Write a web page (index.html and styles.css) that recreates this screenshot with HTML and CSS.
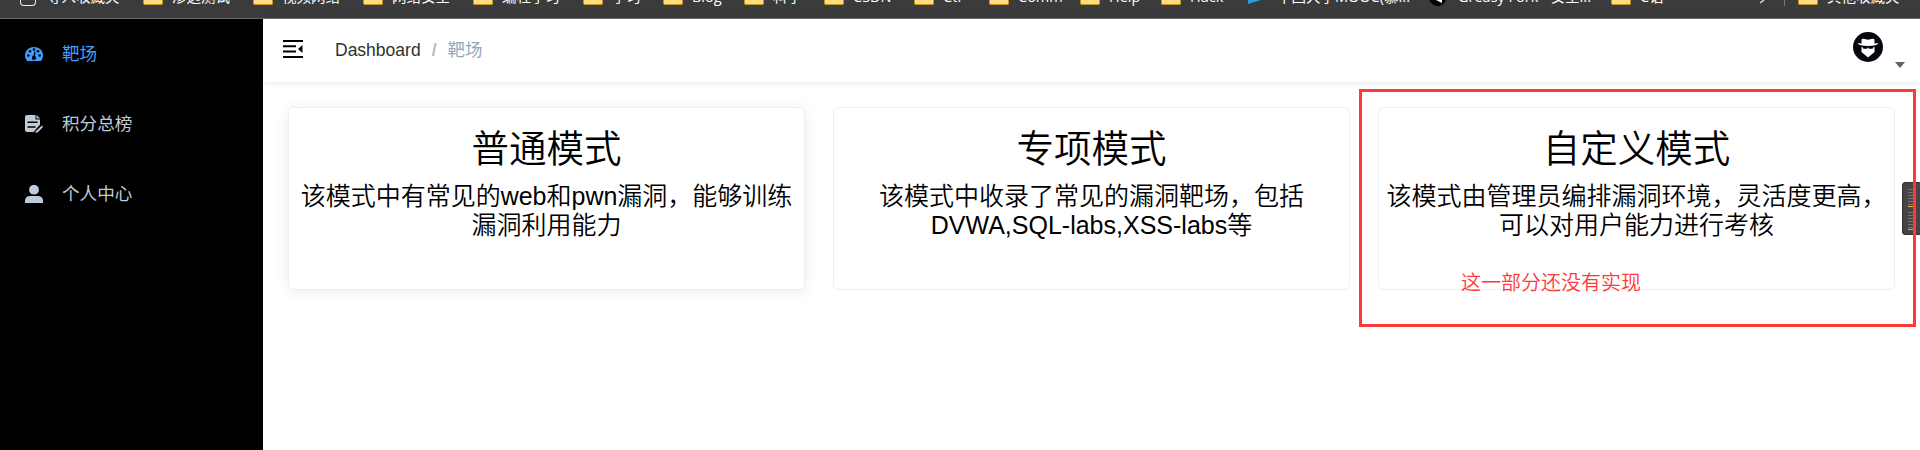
FILE: index.html
```html
<!DOCTYPE html>
<html lang="zh-CN">
<head>
<meta charset="utf-8">
<title>靶场</title>
<link rel="stylesheet" href="styles.css">
</head>
<body>
<nav class="bookmarks">
  <span class="bm bm-wide"><i class="device"></i><b>导入收藏夹</b></span>
  <span class="bm" style="width:110px"><i class="folder"></i><b>渗透测试</b></span>
  <span class="bm" style="width:110px"><i class="folder"></i><b>视频网络</b></span>
  <span class="bm" style="width:110px"><i class="folder"></i><b>网络安全</b></span>
  <span class="bm" style="width:110px"><i class="folder"></i><b>编程学习</b></span>
  <span class="bm" style="width:80px"><i class="folder"></i><b>学习</b></span>
  <span class="bm" style="width:81px"><i class="folder"></i><b>Blog</b></span>
  <span class="bm" style="width:80px"><i class="folder"></i><b>科学</b></span>
  <span class="bm" style="width:90px"><i class="folder"></i><b>CSDN</b></span>
  <span class="bm" style="width:75px"><i class="folder"></i><b>Ctf</b></span>
  <span class="bm" style="width:91px"><i class="folder"></i><b>Comm</b></span>
  <span class="bm" style="width:81px"><i class="folder"></i><b>Help</b></span>
  <span class="bm" style="width:87px"><i class="folder"></i><b>Hack</b></span>
  <span class="bm" style="width:181px"><svg class="site" width="20" height="6" viewBox="0 0 20 6"><path d="M0 0H13L0 4Z" fill="#2b9bd8"/></svg><b>中国大学MOOC(慕...</b></span>
  <span class="bm" style="width:182px"><svg class="site" width="20" height="6" viewBox="0 0 20 6"><path d="M0 0H17Q14 6 9 6T0 0Z" fill="#000"/><path d="M7 0H13V3Z" fill="#fff"/></svg><b>Greasy Fork - 安全...</b></span>
  <span class="bm" style="width:148px"><i class="folder"></i><b>C语</b></span>
  <span class="more"><svg width="8" height="4" viewBox="0 0 8 4"><path d="M5 0L1 3" stroke="#ddd" stroke-width="1.5"/></svg></span>
  <span class="bm"><i class="folder"></i><b>其他收藏夹</b></span>
</nav>
<div class="app">
  <aside class="sidebar">
    <a class="item active"><svg width="18" height="18" viewBox="0 0 18 18"><path fill="currentColor" d="M2 16C-2.500 10 1 2 9 2s11.500 8 7 14z"/><g fill="#000"><circle cx="3.300" cy="10.500" r="1.300"/><circle cx="5" cy="6.300" r="1.300"/><circle cx="9" cy="4.500" r="1.300"/><circle cx="13" cy="6.300" r="1.300"/><circle cx="14.700" cy="10.500" r="1.300"/><path d="M9.500 6.500l1 .2-.4 4.300a2.100 2.100 0 1 1-1.700-.2z"/></g></svg>靶场</a>
    <a class="item"><svg width="18" height="18" viewBox="0 0 18 18"><path fill="currentColor" d="M2 0H10.500V4.500H15V9.500L8.500 17H2Q0 17 0 15V2Q0 0 2 0ZM11.500 0L15 3.500H11.500ZM9.500 17.500L17 10.500 18 12 12.500 17.500Z"/><path d="M2.500 7.300H12.500M2.500 12H10.500" stroke="#000" stroke-width="1.600"/></svg>积分总榜</a>
    <a class="item"><svg width="18" height="18" viewBox="0 0 18 18"><circle cx="9" cy="4.700" r="4.900" fill="currentColor"/><path fill="currentColor" d="M0 18v-2q0-5 5.500-5h7q5.500 0 5.500 5v2z"/></svg>个人中心</a>
  </aside>
  <div class="page">
    <header class="topbar">
      <svg class="toggle" width="20" height="18" viewBox="0 0 20 18"><path d="M0 1H20M0 6.300H13M0 11.500H13M0 17H20" stroke="#000" stroke-width="2"/><path d="M19.500 5v8L15 9z"/></svg>
      <div class="crumbs"><span>Dashboard</span><span class="sep">/</span><span class="current">靶场</span></div>
      <svg class="avatar" width="30" height="30" viewBox="0 0 30 30"><circle cx="15" cy="15" r="15" fill="#05070c"/><path fill="#fff" d="M8.500 11.500V8q0-1.500 2-1.300l4.500 1 4.500-1q2-.2 2 1.300v3.500q3 0 4-.7-1 3.200-10.500 3.200T4.500 10.800q1 .7 4 .7zM8.500 15h13v5L15 25.500l-6.500-5.500z"/><path d="M9 14.500l6 .8 6-.8-1.500 2.300h-3L15 16l-1.500.8h-3z"/></svg>
      <svg class="caret" width="10" height="6" viewBox="0 0 10 6"><path d="M0 0H10L5 6Z" fill="#606266"/></svg>
    </header>
    <main class="cards">
      <section class="card raised"><h2>普通模式</h2><p>该模式中有常见的web和pwn漏洞，能够训练<br>漏洞利用能力</p></section>
      <section class="card"><h2>专项模式</h2><p>该模式中收录了常见的漏洞靶场，包括<br>DVWA,SQL-labs,XSS-labs等</p></section>
      <section class="card"><h2>自定义模式</h2><p>该模式由管理员编排漏洞环境，灵活度更高，<br>可以对用户能力进行考核</p></section>
    </main>
  </div>
</div>
<div class="meter"><div class="bars orange"></div><div class="bars green"></div></div>
<div class="mark"><span>这一部分还没有实现</span></div>
</body>
</html>
```
FILE: styles.css
```css
* { box-sizing: border-box; }
body { margin: 0; height: 450px; overflow: hidden; position: relative; background: #fff; color: #000; font-family: "Liberation Sans", "Noto Sans CJK SC", sans-serif; }
.bookmarks { height: 19px; background: #3b3b3b; border-bottom: 1px solid #6b6b6b; display: flex; padding-left: 20px; overflow: hidden; }
.bm { display: flex; flex: none; height: 18px; color: #fff; }
.bm-wide { width: 123px; }
.bm b { font: 14.5px/18px "Open Sans", "Noto Sans CJK SC", sans-serif; margin: -12px 0 0 9px; height: 18px; white-space: nowrap; }
.folder { width: 20px; height: 5px; background: #ffdc82; border: 1px solid #c5951f; border-top: 0; border-radius: 0 0 2px 2px; flex: none; }
.device { width: 16px; height: 6px; border: 1.5px solid #eee; border-top: 0; border-radius: 0 0 4px 4px; flex: none; margin-right: 2px; }
.site { flex: none; }
.more { width: 26px; height: 6px; border-right: 1px solid #777; margin-right: 13px; flex: none; }
.more svg { display: block; }
.app { display: flex; height: 431px; }
.sidebar { width: 263px; background: #000; flex: none; }
.item { height: 70px; padding-left: 25px; display: flex; align-items: center; gap: 19px; color: #bfcbd9; font-size: 17.6px; line-height: 24px; }
.item.active { color: #409eff; }
.page { flex: 1; min-width: 0; }
.topbar { height: 63px; display: flex; align-items: center; padding-left: 20px; box-shadow: 0 1px 5px rgba(0, 21, 41, .1); font-size: 17.5px; margin-bottom: 25px; }
.toggle { margin: -4px 32px 0 0; }
.crumbs { display: flex; align-items: baseline; color: #303133; line-height: 24px; margin-top: -1px; }
.sep { margin: 0 11px; color: #b7bcc6; font-weight: bold; }
.current { color: #97a8be; }
.avatar { margin: -7px 12px 0 auto; }
.caret { margin: 28px 15px 0 0; }
.cards { display: flex; gap: 28px; padding: 0 25px; }
.card { flex: 1; min-width: 0; height: 183px; border: 1px solid #ebeef5; border-radius: 5px; padding: 19px 0 0; text-align: center; white-space: nowrap; }
.raised { box-shadow: 0 2px 15px rgba(0, 0, 0, .08); }
.card h2 { font-size: 37.5px; line-height: 44px; font-weight: 350; margin: 0 0 11px; }
.card p { font-size: 25px; line-height: 29px; font-weight: 350; margin: 0; }
.mark { position: absolute; left: 1359px; top: 89px; width: 557px; height: 238px; border: 3px solid #ff3838; padding: 177px 0 0 99px; color: #ff3838; font-size: 20px; line-height: 28px; font-weight: 350; }
.meter { position: absolute; left: 1902px; top: 182px; width: 20px; height: 53px; background: #454545; border: 1px solid #303030; border-radius: 3px; padding: 6px 0 0 5px; }
.bars { width: 8px; height: 18px; margin-bottom: 5px; background: repeating-linear-gradient(#777 0 1px, transparent 1px 3px); border-bottom: 1px solid; }
.orange { color: #ffac38; }
.green { color: #80e522; }
```
